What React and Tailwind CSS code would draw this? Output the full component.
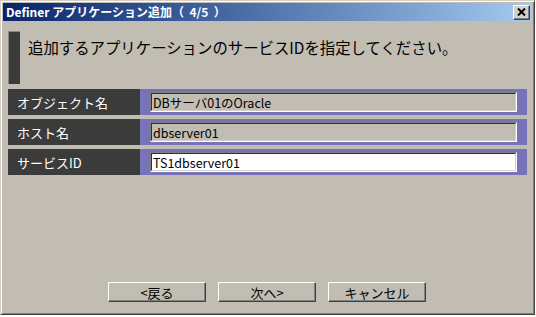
import React from 'react';

const rows = [
    { label: 'オブジェクト名', value: 'DBサーバ01のOracle', editable: false },
    { label: 'ホスト名', value: 'dbserver01', editable: false },
    { label: 'サービスID', value: 'TS1dbserver01', editable: true },
];

const buttons = ['<戻る', '次へ>', 'キャンセル'];

const App = () => {
    return (
        <div className="w-[536px] h-[317px] bg-white font-['Noto_Sans_CJK_JP','DejaVu_Sans',sans-serif]">
            {/* Window */}
            <div className="w-[535px] h-[315px] flex flex-col p-[2px] bg-[#c1bdb2] border border-t-[#d4d0c8] border-l-[#d4d0c8] border-r-[#404040] border-b-[#404040] shadow-[inset_1px_1px_0_#ffffff,inset_-1px_-1px_0_#808080]">
                {/* Title bar */}
                <div className="h-[18px] flex items-center justify-between bg-gradient-to-r from-[#0a246a] to-[#a6caf0]">
                    <span className="pl-[3px] text-[12px] leading-[12px] font-bold text-white whitespace-pre">
                        {'Definer アプリケーション追加（  4/5  ）'}
                    </span>
                    <div className="mr-[2px] w-[17px] h-[15px] flex items-center justify-center bg-[#d4d0c8] border border-t-white border-l-white border-r-[#404040] border-b-[#404040] shadow-[inset_-1px_-1px_0_#808080]">
                        <svg width="9" height="8" viewBox="0 0 9 8">
                            <path d="M1 0.5 L8 7.5 M8 0.5 L1 7.5" stroke="#000" strokeWidth="2" />
                        </svg>
                    </div>
                </div>

                {/* Message */}
                <div className="flex mt-[10px] pl-[5px] h-[53px]">
                    <div className="w-[12px] h-full bg-[#3b3b3b] border-t border-l border-[#8a8780]" />
                    <p className="ml-[8px] mt-[8px] text-[15.4px] leading-[16px] text-black whitespace-nowrap">
                        追加するアプリケーションのサービスIDを指定してください。
                    </p>
                </div>

                {/* Form rows */}
                <div className="flex flex-col gap-[4px] mt-[5px] pl-[5px] pr-[5px]">
                    {rows.map((row) => (
                        <div key={row.label} className="flex h-[26px]">
                            <div className="w-[132px] flex items-center pl-[9px] bg-[#3b3b3b] text-white text-[13px] leading-[13px] whitespace-nowrap">
                                {row.label}
                            </div>
                            <div className="flex-1 py-[3px] px-[10px] bg-[#7773b8]">
                                <div className={`h-full border border-t-[#808080] border-l-[#808080] border-r-white border-b-white ${row.editable ? 'bg-white' : 'bg-[#c1bdb2]'}`}>
                                    <div className="h-full flex items-center pl-[1px] border border-t-[#303030] border-l-[#303030] border-r-[#d4d0c8] border-b-[#d4d0c8] text-[12.5px] leading-[13px] text-black whitespace-nowrap">
                                        {row.value}
                                    </div>
                                </div>
                            </div>
                        </div>
                    ))}
                </div>

                {/* Buttons */}
                <div className="mt-auto mb-[10px] flex gap-[12px] pl-[105px]">
                    {buttons.map((b) => (
                        <button
                            key={b}
                            className="w-[98px] h-[20px] flex items-center justify-center bg-[#c1bdb2] border border-t-white border-l-white border-r-[#404040] border-b-[#404040] shadow-[inset_-1px_-1px_0_#808080] text-[13px] leading-[13px] text-black"
                        >
                            {b}
                        </button>
                    ))}
                </div>
            </div>
        </div>
    );
};

export default App;
